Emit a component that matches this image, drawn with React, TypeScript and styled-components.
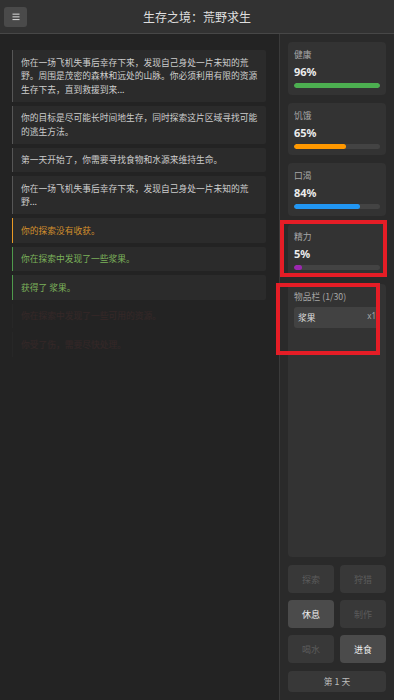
import React from 'react';
import styled, { createGlobalStyle } from 'styled-components';

const Global = createGlobalStyle`
  html, body { margin: 0; padding: 0; background: #232323; }
  body { font-family: "Noto Sans", "Noto Sans CJK SC", sans-serif; }
  * { box-sizing: border-box; }
`;

const Page = styled.div`
  width: 394px;
  height: 700px;
  display: flex;
  flex-direction: column;
  background: #232323;
  overflow: hidden;
`;

const Header = styled.header`
  height: 34px;
  flex: none;
  display: grid;
  grid-template-columns: 1fr auto 1fr;
  align-items: center;
  padding: 0 4px;
  background: #323232;
  border-bottom: 1px solid #474747;
`;

const MenuButton = styled.button`
  justify-self: start;
  width: 23px;
  height: 20px;
  padding: 0;
  margin-top: 1px;
  border: none;
  border-radius: 3px;
  background: #4a4a4a;
  display: flex;
  align-items: center;
  justify-content: center;
`;

const Title = styled.h1`
  margin: 0;
  font-size: 12px;
  font-weight: 400;
  color: #dedede;
  font-family: "Noto Sans CJK SC", sans-serif;
`;

const Main = styled.div`
  flex: 1;
  min-height: 0;
  display: flex;
`;

const Log = styled.section`
  width: 280px;
  flex: none;
  border-right: 1px solid #3a3a3a;
  padding: 16px 13px 0 12px;
  display: flex;
  flex-direction: column;
  gap: 4px;
  background: #232323;
`;

const tones = {
  normal: { border: '#565656', text: '#cdcdcd' },
  warn: { border: '#e89a26', text: '#d38f2b' },
  good: { border: '#4f9a4c', text: '#7bb15a' },
  bad: { border: '#565656', text: '#e05555' },
};

type Tone = keyof typeof tones;

const Message = styled.div<{ $tone: Tone; $faded?: boolean }>`
  background: #2b2b2b;
  border-left: 1px solid ${(p) => tones[p.$tone].border};
  border-radius: 0 2px 2px 0;
  padding: 5.5px 8px;
  font-family: "Noto Sans CJK SC", sans-serif;
  font-size: 8.75px;
  line-height: 13.5px;
  color: ${(p) => tones[p.$tone].text};
  opacity: ${(p) => (p.$faded ? 0.09 : 1)};
`;

const Side = styled.aside`
  flex: 1;
  padding: 8px;
  display: flex;
  flex-direction: column;
  gap: 8px;
  background: #2a2a2a;
`;

const StatCard = styled.div`
  position: relative;
  min-height: 52.5px;
  background: #333333;
  border-radius: 4px;
  padding: 6px;
`;

const Label = styled.div`
  font-family: "Noto Sans CJK SC", sans-serif;
  font-size: 8.75px;
  line-height: 14px;
  color: #a6a6a6;
`;

const Value = styled.div`
  margin-top: 2px;
  font-size: 11px;
  line-height: 16px;
  font-weight: 700;
  color: #ececec;
`;

const Track = styled.div`
  margin-top: 3px;
  height: 5px;
  border-radius: 3px;
  background: #434343;
  overflow: hidden;
`;

const Fill = styled.div<{ $color: string }>`
  height: 100%;
  border-radius: 3px;
  background: ${(p) => p.$color};
`;

const Inventory = styled.div`
  position: relative;
  flex: 1;
  background: #333333;
  border-radius: 4px;
  padding: 6px;
`;

const ItemRow = styled.div`
  margin-top: 3px;
  height: 21px;
  padding: 0 4px;
  border-radius: 3px;
  background: #424242;
  display: flex;
  align-items: center;
  justify-content: space-between;
`;

const ItemName = styled.span`
  font-family: "Noto Sans CJK SC", sans-serif;
  font-size: 8.75px;
  color: #dddddd;
`;

const ItemCount = styled.span`
  font-size: 8px;
  color: #a8a8a8;
  align-self: flex-start;
  margin-top: 3px;
`;

const Actions = styled.div`
  display: grid;
  grid-template-columns: 1fr 1fr;
  grid-auto-rows: 28px;
  column-gap: 6px;
  row-gap: 7px;
`;

const ActionButton = styled.button<{ $enabled?: boolean }>`
  border: none;
  border-radius: 4px;
  padding: 0;
  font-family: "Noto Sans CJK SC", sans-serif;
  font-size: 9px;
  background: ${(p) => (p.$enabled ? '#4b4b4b' : '#383838')};
  color: ${(p) => (p.$enabled ? '#eeeeee' : '#5b5b5b')};
`;

const Day = styled.div`
  height: 21px;
  border-radius: 4px;
  background: #383838;
  display: flex;
  align-items: center;
  justify-content: center;
  font-family: "Noto Sans CJK SC", sans-serif;
  font-size: 8.75px;
  color: #bcbcbc;
`;

const Highlight = styled.div`
  position: absolute;
  border: 4.5px solid #e51d26;
  pointer-events: none;
`;

const EnergyHighlight = styled(Highlight)`
  left: -8px;
  top: -3.5px;
  width: 107px;
  height: 57px;
`;

const InventoryHighlight = styled(Highlight)`
  left: -12px;
  top: -1px;
  width: 104px;
  height: 72px;
`;

const messages: { text: string; tone: Tone; faded?: boolean }[] = [
  { text: '你在一场飞机失事后幸存下来，发现自己身处一片未知的荒野。周围是茂密的森林和远处的山脉。你必须利用有限的资源生存下去，直到救援到来...', tone: 'normal' },
  { text: '你的目标是尽可能长时间地生存，同时探索这片区域寻找可能的逃生方法。', tone: 'normal' },
  { text: '第一天开始了，你需要寻找食物和水源来维持生命。', tone: 'normal' },
  { text: '你在一场飞机失事后幸存下来，发现自己身处一片未知的荒野...', tone: 'normal' },
  { text: '你的探索没有收获。', tone: 'warn' },
  { text: '你在探索中发现了一些浆果。', tone: 'good' },
  { text: '获得了 浆果。', tone: 'good' },
  { text: '你在探索中发现了一些可用的资源。', tone: 'bad', faded: true },
  { text: '你受了伤，需要尽快处理。', tone: 'bad', faded: true },
];

const stats = [
  { label: '健康', value: 96, bar: 100, color: '#4caf50' },
  { label: '饥饿', value: 65, bar: 61, color: '#ff9800' },
  { label: '口渴', value: 84, bar: 77, color: '#2196f3' },
  { label: '精力', value: 5, bar: 9, color: '#9c27b0' },
];

const actions = [
  { label: '探索', enabled: false },
  { label: '狩猎', enabled: false },
  { label: '休息', enabled: true },
  { label: '制作', enabled: false },
  { label: '喝水', enabled: false },
  { label: '进食', enabled: true },
];

export default function App() {
  return (
    <Page>
      <Global />
      <Header>
        <MenuButton aria-label="menu">
          <svg width="8" height="8" viewBox="0 0 8 8">
            <rect x="0.5" y="0.6" width="7" height="1.1" fill="#cfcfcf" />
            <rect x="0.5" y="3.3" width="7" height="1.1" fill="#cfcfcf" />
            <rect x="0.5" y="6" width="7" height="1.1" fill="#cfcfcf" />
          </svg>
        </MenuButton>
        <Title>生存之境：荒野求生</Title>
        <span />
      </Header>
      <Main>
        <Log>
          {messages.map((m, i) => (
            <Message key={i} $tone={m.tone} $faded={m.faded}>
              {m.text}
            </Message>
          ))}
        </Log>
        <Side>
          {stats.map((s) => (
            <StatCard key={s.label}>
              <Label>{s.label}</Label>
              <Value>{s.value}%</Value>
              <Track>
                <Fill $color={s.color} style={{ width: `${s.bar}%` }} />
              </Track>
              {s.label === '精力' && <EnergyHighlight />}
            </StatCard>
          ))}
          <Inventory>
            <Label>物品栏 (1/30)</Label>
            <ItemRow>
              <ItemName>浆果</ItemName>
              <ItemCount>x1</ItemCount>
            </ItemRow>
            <InventoryHighlight />
          </Inventory>
          <Actions>
            {actions.map((a) => (
              <ActionButton key={a.label} $enabled={a.enabled}>
                {a.label}
              </ActionButton>
            ))}
          </Actions>
          <Day>第 1 天</Day>
        </Side>
      </Main>
    </Page>
  );
}
